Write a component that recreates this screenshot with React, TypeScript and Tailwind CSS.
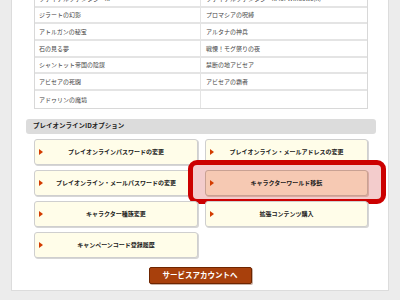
import * as React from "react";

/* ---------------- Data ---------------- */

const titles: [string, string][] = [
  ["ファイナルファンタジーXI", "ファイナルファンタジーXI for Windows(R)"],
  ["ジラートの幻影", "プロマシアの呪縛"],
  ["アトルガンの秘宝", "アルタナの神兵"],
  ["石の見る夢", "戦慄！モグ祭りの夜"],
  ["シャントット帝国の陰謀", "禁断の地アビセア"],
  ["アビセアの死闘", "アビセアの覇者"],
  ["アドゥリンの魔境", ""],
];

const options: { label: string; active?: boolean }[] = [
  { label: "プレイオンラインパスワードの変更" },
  { label: "プレイオンライン・メールアドレスの変更" },
  { label: "プレイオンライン・メールパスワードの変更" },
  { label: "キャラクターワールド移転", active: true },
  { label: "キャラクター種族変更" },
  { label: "拡張コンテンツ購入" },
  { label: "キャンペーンコード登録履歴" },
];

/* ---------------- Option button ---------------- */

const OptionButton = ({ label, active }: { label: string; active?: boolean }) => (
  <div className="relative h-[26px]">
    {active && (
      <div className="absolute -left-[17px] -right-[18px] -top-[10px] -bottom-[8px] rounded-[9px] border-[5px] border-[#cc0000] bg-[#f3cccc]" />
    )}
    <div
      className={
        active
          ? "relative flex h-full items-center rounded-[3px] border border-[#c9a193] bg-[#f6c9b3] shadow-[1px_1px_0_#d9a9a0]"
          : "relative flex h-full items-center rounded-[3px] border border-[#cfcfcf] bg-[#fffde9] shadow-[1px_1px_0_#d6d6d6]"
      }
    >
      <span className="ml-[4px] h-0 w-0 border-y-[3.5px] border-l-[4px] border-y-transparent border-l-[#d33c00]" />
      <span className="flex-1 whitespace-nowrap pr-[8px] text-center text-[6px] font-bold text-[#1a1a1a]">
        {label}
      </span>
    </div>
  </div>
);

/* ---------------- App ---------------- */

export default function App() {
  return (
    <div
      className="h-[300px] w-[400px] overflow-hidden bg-[#ececec]"
      style={{ fontFamily: '"Noto Sans CJK JP", "Noto Sans", sans-serif' }}
    >
      <div className="ml-[11px] flex h-[291px] w-[378px] flex-col border-b border-l border-r border-[#dcdcdc] bg-white">
        {/* title table */}
        <div className="-mt-[9px] ml-[22px] w-[334px] border-x border-b border-[#d8d8d8]">
          {titles.map(([a, b], i) => (
            <div
              key={i}
              className="grid h-[16.67px] grid-cols-2 border-b-2 border-[#e4e4e4] last:border-b-0"
            >
              <div className="flex items-center whitespace-nowrap border-r border-[#e4e4e4] pl-[4px] text-[6px] text-[#444]">
                {a}
              </div>
              <div className="flex items-center whitespace-nowrap pl-[5px] text-[6px] text-[#444]">
                {b}
              </div>
            </div>
          ))}
        </div>

        {/* section header */}
        <div className="ml-[14px] mt-[10px] flex h-[15px] w-[350px] items-center rounded-[3px] bg-[#dcdcdc] pl-[7px] text-[6.5px] font-bold text-[#222]">
          プレイオンラインIDオプション
        </div>

        {/* option buttons */}
        <div className="ml-[22px] mt-[5px] grid w-[334px] grid-cols-[164px_163px] gap-x-[7px] gap-y-[5px]">
          {options.map((o) => (
            <OptionButton key={o.label} label={o.label} active={o.active} />
          ))}
        </div>

        {/* service account */}
        <div className="mt-[9px] flex justify-center">
          <div className="flex h-[17px] w-[103px] items-center justify-center rounded-[2px] border border-[#6e2500] bg-[#a8400c] text-[7.5px] font-bold text-white shadow-[1px_1px_0_#c9b3a8]">
            サービスアカウントへ
          </div>
        </div>
      </div>
    </div>
  );
}
